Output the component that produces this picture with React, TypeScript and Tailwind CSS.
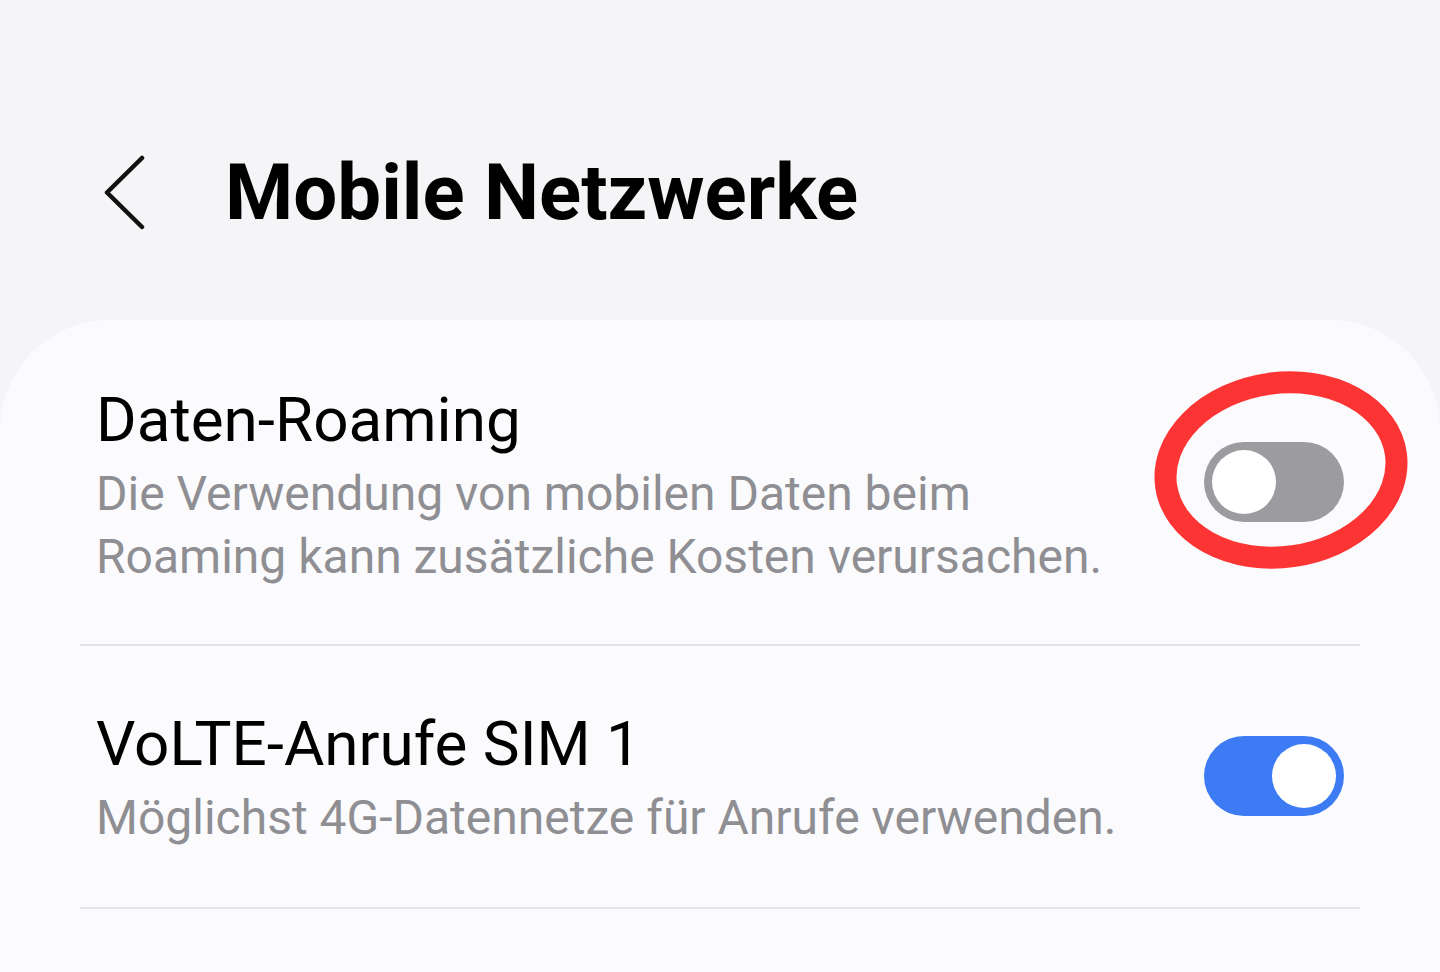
import React, { useState } from "react";

const Toggle = ({
  on,
  onClick,
  className = "",
}: {
  on: boolean;
  onClick: () => void;
  className?: string;
}) => (
  <button
    onClick={onClick}
    className={`relative shrink-0 w-[140px] h-[80px] rounded-full ${
      on ? "bg-[#3d7bf5]" : "bg-[#9b9ba0]"
    } ${className}`}
  >
    <span
      className={`absolute top-[8px] w-[64px] h-[64px] rounded-full bg-white ${
        on ? "left-[68px]" : "left-[8px]"
      }`}
    />
  </button>
);

const App = () => {
  const [roaming, setRoaming] = useState(false);
  const [volte, setVolte] = useState(true);

  return (
    <div className="min-h-screen bg-[#f5f5f7] flex flex-col font-['Roboto',sans-serif]">
      <div className="pt-[150px] h-[236px] flex items-center pl-[103px]">
        <svg width="42" height="76" viewBox="0 0 42 76" fill="none">
          <path
            d="M39 3 L4 37.5 L39 72"
            stroke="#111"
            strokeWidth="4.5"
            strokeLinecap="round"
            strokeLinejoin="round"
          />
        </svg>
        <h1 className="ml-[80px] text-[78px] font-bold text-black leading-none">
          Mobile Netzwerke
        </h1>
      </div>

      <div className="mt-[84px] flex-1 bg-[#fbfbfd] rounded-t-[110px] relative">
        <div className="flex items-center justify-between pl-[96px] pr-[96px] pt-[64px] pb-[56px]">
          <div>
            <div className="text-[62px] leading-[72px] text-black">Daten-Roaming</div>
            <div className="mt-[6px] text-[48px] leading-[63px] text-[#8e8e93] whitespace-nowrap">
              <div>Die Verwendung von mobilen Daten beim</div>
              <div>Roaming kann zusätzliche Kosten verursachen.</div>
            </div>
          </div>
          <Toggle on={roaming} onClick={() => setRoaming(!roaming)} className="mb-[8px]" />
        </div>

        <div className="mx-[80px] h-[2px] bg-[#e4e4e7]" />

        <div className="flex items-center justify-between pl-[96px] pr-[96px] pt-[62px] pb-[58px]">
          <div>
            <div className="text-[62px] leading-[72px] text-black">VoLTE-Anrufe SIM 1</div>
            <div className="mt-[6px] text-[48px] leading-[63px] text-[#8e8e93] whitespace-nowrap">
              Möglichst 4G-Datennetze für Anrufe verwenden.
            </div>
          </div>
          <Toggle on={volte} onClick={() => setVolte(!volte)} className="mb-[6px]" />
        </div>

        <div className="mx-[80px] h-[2px] bg-[#e4e4e7]" />

        {/* red marker round the roaming switch */}
        <svg
          className="absolute left-[1150px] top-[48px] pointer-events-none"
          width="262"
          height="204"
          viewBox="0 0 262 204"
          fill="none"
        >
          <ellipse
            cx="131"
            cy="102"
            rx="116"
            ry="87"
            stroke="#fd3434"
            strokeWidth="22"
            transform="rotate(-8 131 102)"
          />
        </svg>
      </div>
    </div>
  );
};

export default App;
